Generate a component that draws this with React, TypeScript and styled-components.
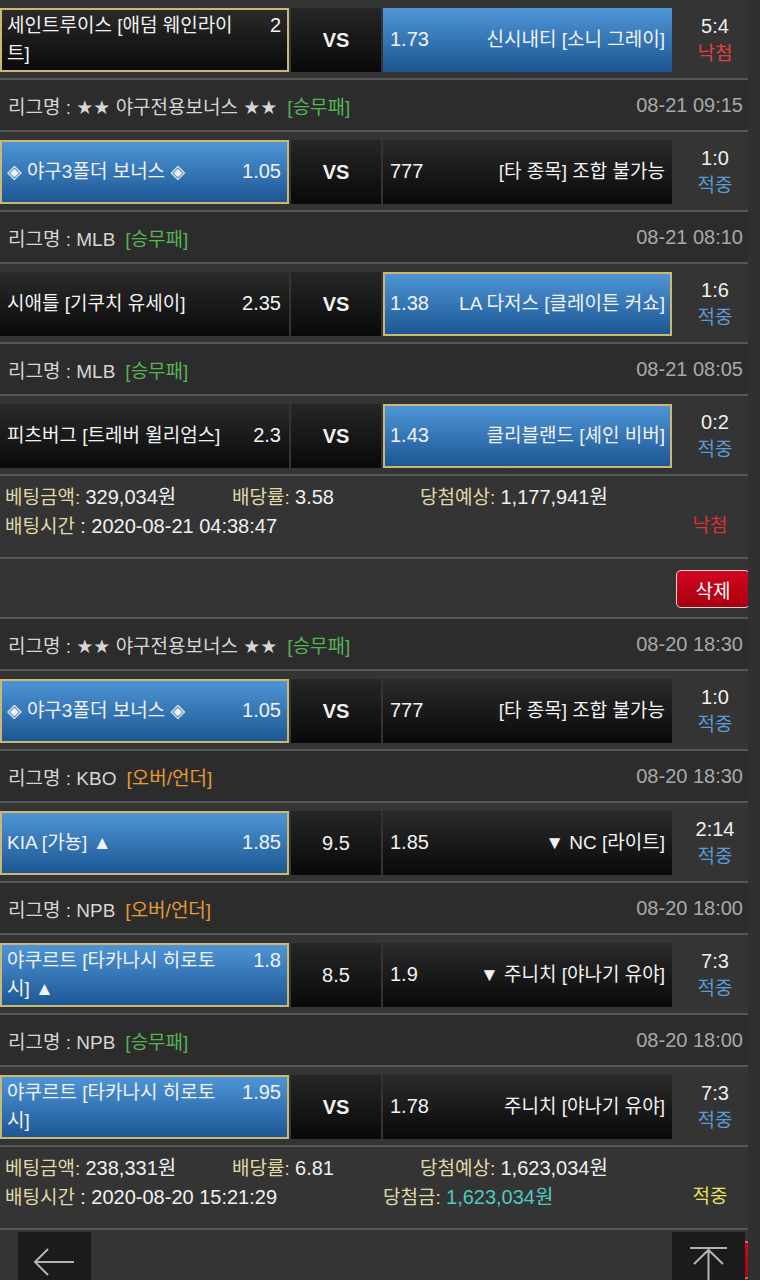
import React from 'react';
import styled, { createGlobalStyle } from 'styled-components';

const GlobalStyle = createGlobalStyle`
  html, body {
    margin: 0;
    padding: 0;
    background: #303030;
    overflow: hidden;
  }
  body {
    font-family: "Liberation Sans", "DejaVu Sans", "Noto Sans CJK KR", sans-serif;
  }
`;

type Tone = 'blue' | 'dark';

interface SideInfo {
  name: string;
  odds: string;
  win?: boolean;
  picked?: boolean;
}

interface Game {
  league?: { name: string; kind: '승무패' | '오버/언더'; date: string };
  home: SideInfo;
  away: SideInfo;
  mid: string;
  score: string;
  hit: boolean;
}

interface Bet {
  games: Game[];
  amount: string;
  rate: string;
  expect: string;
  time: string;
  prize?: string;
  hit: boolean;
}

const Page = styled.div`
  width: 748px;
  height: 1280px;
  overflow: hidden;
  background: #343434;
  color: #f0f0f0;
  font-size: 19px;
`;

const LeagueRow = styled.div`
  display: flex;
  align-items: center;
  justify-content: space-between;
  height: 50px;
  padding: 0 5px 0 8px;
  background: #2c2c2c;
  border-bottom: 2px solid #575757;
`;

const LeagueTitle = styled.span`
  color: #d6d6d6;
`;

const Kind = styled.span<{ $kind: string }>`
  margin-left: 10px;
  color: ${p => (p.$kind === '승무패' ? '#56b356' : '#e39b36')};
`;

const Date = styled.span`
  color: #a9a9a9;
  font-size: 20px;
`;

const MatchRow = styled.div`
  display: grid;
  grid-template-columns: 289px 90px 289px 1fr;
  column-gap: 2px;
  height: 64px;
  padding: 8px 0 6px;
  border-bottom: 2px solid #575757;
`;

const Cell = styled.div<{ $tone: Tone; $picked?: boolean; $away?: boolean }>`
  display: flex;
  align-items: center;
  box-sizing: border-box;
  height: 64px;
  padding: ${p => (p.$away ? '0 5px 0 5px' : '0 6px 0 5px')};
  border: 2px solid ${p => (p.$picked ? '#ccb873' : 'transparent')};
  background: ${p =>
    p.$tone === 'blue'
      ? 'linear-gradient(#5097d8, #1b5592)'
      : 'linear-gradient(#2b2b2b, #090909)'};
  background-origin: border-box;
  color: #f2f2f2;
`;

const SideLine = styled.div<{ $away?: boolean }>`
  display: flex;
  align-items: baseline;
  width: 100%;
  flex-direction: ${p => (p.$away ? 'row-reverse' : 'row')};
`;

const Team = styled.span<{ $away?: boolean }>`
  flex: 1;
  line-height: 28px;
  text-align: ${p => (p.$away ? 'right' : 'left')};
`;

const Odds = styled.span<{ $away?: boolean }>`
  flex-shrink: 0;
  width: 46px;
  font-size: 20px;
  text-align: ${p => (p.$away ? 'left' : 'right')};
`;

const Middle = styled.div<{ $bold: boolean }>`
  display: flex;
  align-items: center;
  justify-content: center;
  height: 64px;
  background: linear-gradient(#262626, #090909);
  font-size: 20px;
  font-weight: ${p => (p.$bold ? 700 : 400)};
`;

const Result = styled.div`
  display: flex;
  flex-direction: column;
  align-items: center;
  justify-content: center;
  padding-left: 8px;
  line-height: 28px;
`;

const Score = styled.span`
  font-size: 20px;
`;

const Verdict = styled.span<{ $color: string }>`
  color: ${p => p.$color};
`;

const Summary = styled.div`
  padding: 7px 0 16px 5px;
  line-height: 28px;
  border-bottom: 2px solid #575757;
`;

const SummaryLine = styled.div<{ $cols: string }>`
  display: grid;
  grid-template-columns: ${p => p.$cols};
`;

const Label = styled.span`
  color: #e0d9a9;
`;

const Value = styled.span<{ $color?: string }>`
  font-size: 20px;
  color: ${p => p.$color || '#f0f0f0'};
`;

const Status = styled.span<{ $color: string }>`
  text-align: center;
  color: ${p => p.$color};
`;

const DeleteRow = styled.div`
  display: flex;
  justify-content: flex-end;
  align-items: flex-start;
  height: 47px;
  padding-top: 11px;
  border-bottom: 2px solid #575757;
`;

const DeleteButton = styled.button`
  width: 74px;
  height: 38px;
  margin-right: -2px;
  border: 1.5px solid #e6d6d6;
  border-radius: 5px;
  background: linear-gradient(#d2061f, #a9000f);
  color: #fff;
  font: 19px "Noto Sans CJK KR", sans-serif;
`;

const FloatButton = styled.div<{ $left: number }>`
  position: fixed;
  top: 1232px;
  left: ${p => p.$left}px;
  width: 73px;
  height: 60px;
  background: #1b1b1b;
`;

const bets: Bet[] = [
  {
    games: [
      {
        home: { name: '세인트루이스 [애덤 웨인라이트]', odds: '2', picked: true },
        away: { name: '신시내티 [소니 그레이]', odds: '1.73', win: true },
        mid: 'VS',
        score: '5:4',
        hit: false,
      },
      {
        league: { name: '★★ 야구전용보너스 ★★', kind: '승무패', date: '08-21 09:15' },
        home: { name: '◈ 야구3폴더 보너스 ◈', odds: '1.05', win: true, picked: true },
        away: { name: '[타 종목] 조합 불가능', odds: '777' },
        mid: 'VS',
        score: '1:0',
        hit: true,
      },
      {
        league: { name: 'MLB', kind: '승무패', date: '08-21 08:10' },
        home: { name: '시애틀 [기쿠치 유세이]', odds: '2.35' },
        away: { name: 'LA 다저스 [클레이튼 커쇼]', odds: '1.38', win: true, picked: true },
        mid: 'VS',
        score: '1:6',
        hit: true,
      },
      {
        league: { name: 'MLB', kind: '승무패', date: '08-21 08:05' },
        home: { name: '피츠버그 [트레버 윌리엄스]', odds: '2.3' },
        away: { name: '클리블랜드 [셰인 비버]', odds: '1.43', win: true, picked: true },
        mid: 'VS',
        score: '0:2',
        hit: true,
      },
    ],
    amount: '329,034원',
    rate: '3.58',
    expect: '1,177,941원',
    time: '2020-08-21 04:38:47',
    hit: false,
  },
  {
    games: [
      {
        league: { name: '★★ 야구전용보너스 ★★', kind: '승무패', date: '08-20 18:30' },
        home: { name: '◈ 야구3폴더 보너스 ◈', odds: '1.05', win: true, picked: true },
        away: { name: '[타 종목] 조합 불가능', odds: '777' },
        mid: 'VS',
        score: '1:0',
        hit: true,
      },
      {
        league: { name: 'KBO', kind: '오버/언더', date: '08-20 18:30' },
        home: { name: 'KIA [가뇽] ▲', odds: '1.85', win: true, picked: true },
        away: { name: '▼ NC [라이트]', odds: '1.85' },
        mid: '9.5',
        score: '2:14',
        hit: true,
      },
      {
        league: { name: 'NPB', kind: '오버/언더', date: '08-20 18:00' },
        home: { name: '야쿠르트 [타카나시 히로토시] ▲', odds: '1.8', win: true, picked: true },
        away: { name: '▼ 주니치 [야나기 유야]', odds: '1.9' },
        mid: '8.5',
        score: '7:3',
        hit: true,
      },
      {
        league: { name: 'NPB', kind: '승무패', date: '08-20 18:00' },
        home: { name: '야쿠르트 [타카나시 히로토시]', odds: '1.95', win: true, picked: true },
        away: { name: '주니치 [야나기 유야]', odds: '1.78' },
        mid: 'VS',
        score: '7:3',
        hit: true,
      },
    ],
    amount: '238,331원',
    rate: '6.81',
    expect: '1,623,034원',
    time: '2020-08-20 15:21:29',
    prize: '1,623,034원',
    hit: true,
  },
];

function SideCell({ side, away }: { side: SideInfo; away?: boolean }) {
  return (
    <Cell $tone={side.win ? 'blue' : 'dark'} $picked={side.picked} $away={away}>
      <SideLine $away={away}>
        <Team $away={away}>{side.name}</Team>
        <Odds $away={away}>{side.odds}</Odds>
      </SideLine>
    </Cell>
  );
}

function GameRows({ game }: { game: Game }) {
  return (
    <>
      {game.league && (
        <LeagueRow>
          <span>
            <LeagueTitle>리그명 : {game.league.name}</LeagueTitle>
            <Kind $kind={game.league.kind}>[{game.league.kind}]</Kind>
          </span>
          <Date>{game.league.date}</Date>
        </LeagueRow>
      )}
      <MatchRow>
        <SideCell side={game.home} />
        <Middle $bold={game.mid === 'VS'}>{game.mid}</Middle>
        <SideCell side={game.away} away />
        <Result>
          <Score>{game.score}</Score>
          <Verdict $color={game.hit ? '#5b9bd6' : '#e2413f'}>{game.hit ? '적중' : '낙첨'}</Verdict>
        </Result>
      </MatchRow>
    </>
  );
}

function BetSummary({ bet }: { bet: Bet }) {
  return (
    <Summary>
      <SummaryLine $cols="227px 188px 1fr">
        <span><Label>베팅금액:</Label> <Value>{bet.amount}</Value></span>
        <span><Label>배당률:</Label> <Value>{bet.rate}</Value></span>
        <span><Label>당첨예상:</Label> <Value>{bet.expect}</Value></span>
      </SummaryLine>
      <SummaryLine $cols="378px 1fr 76px">
        <span><Label>배팅시간</Label> <Value>: {bet.time}</Value></span>
        <span>
          {bet.prize && (
            <>
              <Label>당첨금:</Label> <Value $color="#4ec8c0">{bet.prize}</Value>
            </>
          )}
        </span>
        <Status $color={bet.hit ? '#e8e05a' : '#d93434'}>{bet.hit ? '적중' : '낙첨'}</Status>
      </SummaryLine>
    </Summary>
  );
}

function BackIcon() {
  return (
    <svg width="73" height="60" viewBox="0 0 73 60" fill="none" stroke="#b4b4b4" strokeWidth="2">
      <path d="M17 30 H56 M30 17 L17 30 L30 43" />
    </svg>
  );
}

function TopIcon() {
  return (
    <svg width="73" height="60" viewBox="0 0 73 60" fill="none" stroke="#b4b4b4" strokeWidth="2">
      <path d="M18 16 H55 M36.5 18 V60 M22 32 L36.5 18 L51 32" />
    </svg>
  );
}

export default function App() {
  return (
    <Page>
      <GlobalStyle />
      {bets.map((bet, i) => (
        <React.Fragment key={i}>
          {i > 0 && (
            <DeleteRow>
              <DeleteButton>삭제</DeleteButton>
            </DeleteRow>
          )}
          {bet.games.map((g, j) => (
            <GameRows key={j} game={g} />
          ))}
          <BetSummary bet={bet} />
        </React.Fragment>
      ))}
      <DeleteRow>
        <DeleteButton>삭제</DeleteButton>
      </DeleteRow>
      <FloatButton $left={18}>
        <BackIcon />
      </FloatButton>
      <FloatButton $left={672}>
        <TopIcon />
      </FloatButton>
    </Page>
  );
}
